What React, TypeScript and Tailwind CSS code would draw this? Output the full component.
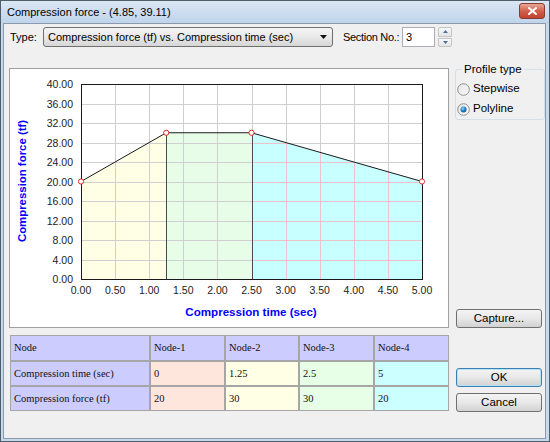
import { Fragment } from 'react';
import clsx from 'clsx';

const X0 = 81;
const X1 = 422;
const Y0 = 279;
const Y1 = 84;

const tx = (t: number) => X0 + (t / 5) * (X1 - X0);
const fy = (f: number) => Y0 - (f / 40) * (Y0 - Y1);
const px = (v: number) => Math.round(v) + 0.5;

const NODES: [number, number][] = [
  [0, 20],
  [1.25, 30],
  [2.5, 30],
  [5, 20]
];

const X_TICKS = [0, 0.5, 1, 1.5, 2, 2.5, 3, 3.5, 4, 4.5, 5];
const Y_TICKS = [0, 4, 8, 12, 16, 20, 24, 28, 32, 36, 40];

const TABLE_ROWS = [
  { label: 'Node', cells: ['Node-1', 'Node-2', 'Node-3', 'Node-4'], header: true },
  { label: 'Compression time (sec)', cells: ['0', '1.25', '2.5', '5'], header: false },
  { label: 'Compression force (tf)', cells: ['20', '30', '30', '20'], header: false }
];

const CELL_COLORS = ['bg-[#ffe6dc]', 'bg-[#ffffe6]', 'bg-[#e6ffe6]', 'bg-[#ccffff]'];

function poly(points: [number, number][]) {
  return points.map(([t, f]) => `${tx(t)},${fy(f)}`).join(' ');
}

function Chart() {
  const yellow = poly([[0, 0], [0, 20], [1.25, 30], [1.25, 0]]);
  const green = poly([[1.25, 0], [1.25, 30], [2.5, 30], [2.5, 0]]);
  const cyan = poly([[2.5, 0], [2.5, 30], [5, 20], [5, 0]]);

  const gridLines = (stroke: string) => (
    <g stroke={stroke} strokeWidth={1}>
      {X_TICKS.slice(1, -1).map((t) => (
        <line key={'v' + t} x1={px(tx(t))} x2={px(tx(t))} y1={Y1} y2={Y0} />
      ))}
      {Y_TICKS.slice(1, -1).map((f) => (
        <line key={'h' + f} x1={X0} x2={X1} y1={px(fy(f))} y2={px(fy(f))} />
      ))}
    </g>
  );

  return (
    <svg width={438} height={258} className="block">
      <defs>
        <clipPath id="cyan-clip">
          <polygon points={cyan} />
        </clipPath>
      </defs>
      <g transform="translate(-10,-69)" fontFamily="'Liberation Sans', Arial, sans-serif">
        <polygon points={yellow} fill="#ffffe6" />
        <polygon points={green} fill="#e8fde8" />
        <polygon points={cyan} fill="#c8ffff" />

        {gridLines('#cfcfcf')}
        <g clipPath="url(#cyan-clip)">{gridLines('#ecc3cb')}</g>

        <line x1={px(tx(1.25))} x2={px(tx(1.25))} y1={fy(30)} y2={Y0} stroke="#4a4a4a" />
        <line x1={px(tx(2.5))} x2={px(tx(2.5))} y1={fy(30)} y2={Y0} stroke="#4a4a4a" />

        <rect x={X0 + 0.5} y={Y1 + 0.5} width={X1 - X0} height={Y0 - Y1} fill="none" stroke="#1a1a1a" />

        <polyline points={poly(NODES)} fill="none" stroke="#1a1a1a" strokeWidth={1} />
        {NODES.map(([t, f]) => (
          <circle key={t} cx={tx(t)} cy={fy(f)} r={2.6} fill="#ffffff" stroke="#e8252a" strokeWidth={1} />
        ))}

        {Y_TICKS.map((f) => (
          <text key={'yl' + f} x={73} y={fy(f) + 4} textAnchor="end" fontSize={10.5} fill="#222222">
            {f.toFixed(2)}
          </text>
        ))}
        {X_TICKS.map((t) => (
          <text key={'xl' + t} x={tx(t)} y={294} textAnchor="middle" fontSize={10.5} fill="#222222">
            {t.toFixed(2)}
          </text>
        ))}

        <text x={251} y={316} textAnchor="middle" fontSize={11.6} fontWeight="bold" fill="#0000ff">
          Compression time (sec)
        </text>
        <text
          x={22}
          y={185}
          textAnchor="middle"
          fontSize={11.4}
          fontWeight="bold"
          fill="#0000ff"
          transform="rotate(-90 22 181)"
        >
          Compression force (tf)
        </text>
      </g>
    </svg>
  );
}

function Radio({ checked }: { checked: boolean }) {
  return (
    <svg width={13} height={13} viewBox="0 0 13 13" className="shrink-0">
      <defs>
        <linearGradient id={checked ? 'rg-on' : 'rg-off'} x1="0" y1="0" x2="1" y2="1">
          <stop offset="0" stopColor="#e3e3e3" />
          <stop offset="1" stopColor="#fbfbfb" />
        </linearGradient>
        <radialGradient id="dot" cx="0.4" cy="0.35" r="0.7">
          <stop offset="0" stopColor="#9fd7f7" />
          <stop offset="0.5" stopColor="#2a86c8" />
          <stop offset="1" stopColor="#0f4e84" />
        </radialGradient>
      </defs>
      <circle cx={6.5} cy={6.5} r={5.8} fill={`url(#${checked ? 'rg-on' : 'rg-off'})`} stroke="#8e8f8f" />
      {checked ? <circle cx={6.5} cy={6.5} r={3} fill="url(#dot)" /> : null}
    </svg>
  );
}

function WinButton({ label, focused }: { label: string; focused?: boolean }) {
  return (
    <div
      className={clsx(
        'flex h-[19px] w-[86px] items-center justify-center rounded-[3px] border bg-linear-to-b from-[#f4f4f4] via-[#e8e8e8] to-[#d2d2d2] text-[11.5px] text-black',
        focused ? 'border-[#3c7fb1] shadow-[inset_0_0_0_1px_#b6e2f8]' : 'border-[#707070]'
      )}
    >
      {label}
    </div>
  );
}

export default function App() {
  return (
    <div className="flex h-[442px] w-[550px] flex-col border border-[#4f5d6b] bg-[#c6daee] font-['Liberation_Sans',Arial,sans-serif] text-black">
      {/* title bar */}
      <div className="flex h-[22px] items-center justify-between bg-linear-to-b from-[#dbe7f4] to-[#bfd4eb] pl-[6px] pr-[4px]">
        <span className="text-[11px]">Compression force - (4.85, 39.11)</span>
        <div className="mt-[-2px] flex h-[16px] w-[26px] items-center justify-center rounded-[3px] border border-[#8a3b31] bg-linear-to-b from-[#e8a695] via-[#d2604c] to-[#c0432e]">
          <svg width={9} height={8} viewBox="0 0 9 8">
            <path d="M1 1 L8 7 M8 1 L1 7" stroke="#ffffff" strokeWidth={2} strokeLinecap="square" />
          </svg>
        </div>
      </div>

      {/* client area */}
      <div className="mb-[2px] ml-[2px] mr-[3px] flex flex-1 flex-col border border-[#8c9aab] bg-[#f0f0f0]">
        <div className="mt-[3px] flex h-[20px] items-center whitespace-nowrap pl-[6px] text-[11px]">
          <span className="w-[33px]">Type:</span>
          <div className="flex h-[20px] w-[290px] items-center justify-between rounded-[3px] border border-[#707070] bg-linear-to-b from-[#f4f4f4] via-[#e9e9e9] to-[#d6d6d6] pl-[4px] pr-[5px]">
            <span>Compression force (tf) vs. Compression time (sec)</span>
            <svg width={7} height={4} viewBox="0 0 7 4">
              <path d="M0 0 H7 L3.5 4 Z" fill="#111111" />
            </svg>
          </div>
          <span className="ml-[10px] w-[59px] shrink-0 tracking-[-0.3px]">Section No.:</span>
          <div className="flex h-[20px] w-[33px] items-center border border-[#abadb3] bg-white pl-[3px]">3</div>
          <div className="ml-[3px] flex h-[20px] w-[14px] flex-col gap-px">
            <div className="flex flex-1 items-center justify-center rounded-t-[2px] border border-[#c5c5c5] bg-linear-to-b from-[#f8f8f8] to-[#e4e4e4]">
              <svg width={5} height={3} viewBox="0 0 5 3">
                <path d="M0 3 H5 L2.5 0 Z" fill="#4a6fa0" />
              </svg>
            </div>
            <div className="flex flex-1 items-center justify-center rounded-b-[2px] border border-[#c5c5c5] bg-linear-to-b from-[#f8f8f8] to-[#e4e4e4]">
              <svg width={5} height={3} viewBox="0 0 5 3">
                <path d="M0 0 H5 L2.5 3 Z" fill="#4a6fa0" />
              </svg>
            </div>
          </div>
        </div>

        <div className="mt-[15px] flex items-start pl-[5px]">
          <div className="mt-[6px] h-[260px] w-[440px] border border-[#a0a0a0] bg-white">
            <Chart />
          </div>
          <div className="ml-[6px] flex h-[266px] w-[90px] flex-col justify-between">
            <fieldset className="h-[58px] rounded-[3px] border border-[#d5dfe5] pl-[1px] pt-[3px] text-[11.5px]">
              <legend className="ml-[5px] px-[2px] leading-[14px]">Profile type</legend>
              <div className="flex h-[20px] items-center gap-[3px]">
                <Radio checked={false} />
                <span>Stepwise</span>
              </div>
              <div className="flex h-[20px] items-center gap-[3px]">
                <Radio checked />
                <span>Polyline</span>
              </div>
            </fieldset>
            <div className="ml-px">
              <WinButton label="Capture..." />
            </div>
          </div>
        </div>

        <div className="mt-[7px] flex items-start pl-[6px]">
          <div className="grid w-[439px] grid-cols-[138px_73px_72px_73px_73px] grid-rows-[24px_23px_23px] gap-[2px] bg-[#a6a6a6] p-px font-['Liberation_Serif','Times_New_Roman',serif] text-[10.5px] text-[#111111]">
            {TABLE_ROWS.map((row) => (
              <Fragment key={row.label}>
                <div className="bg-[#ccccff] pl-[3px] pt-[4px]">{row.label}</div>
                {row.cells.map((cell, index) => (
                  <div
                    key={row.label + index}
                    className={clsx('pl-[3px] pt-[4px]', row.header ? 'bg-[#ccccff]' : CELL_COLORS[index])}
                  >
                    {cell}
                  </div>
                ))}
              </Fragment>
            ))}
          </div>
          <div className="ml-[7px] flex flex-col gap-[6px] pt-[33px]">
            <WinButton label="OK" focused />
            <WinButton label="Cancel" />
          </div>
        </div>
      </div>
    </div>
  );
}
